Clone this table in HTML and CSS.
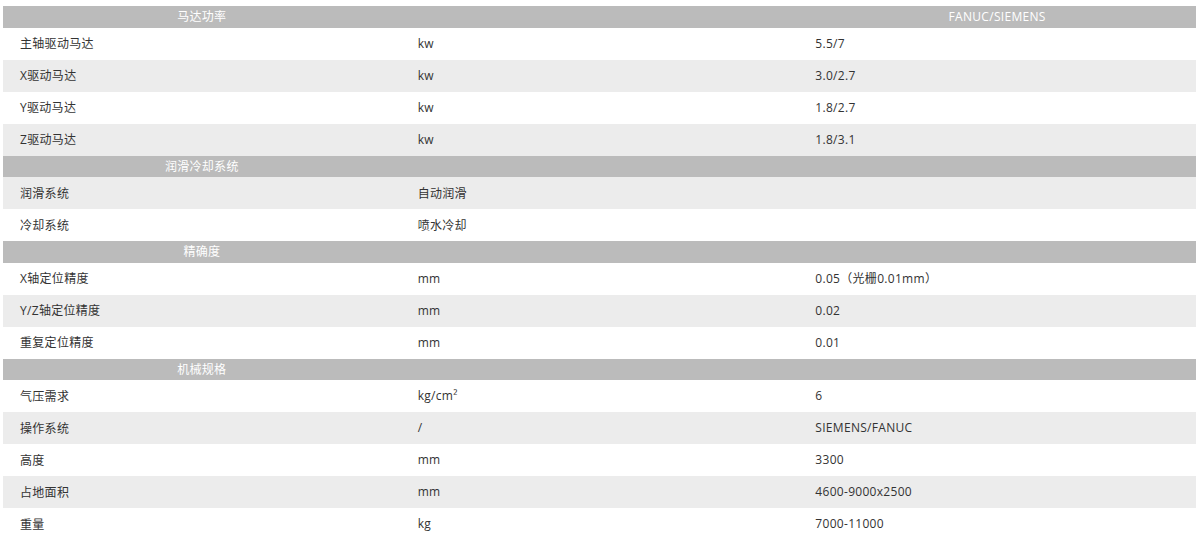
FILE: index.html
```html
<!DOCTYPE html>
<html lang="zh-CN">
<head>
<meta charset="utf-8">
<title>参数</title>
<link rel="stylesheet" href="styles.css">
</head>
<body>
<div class="spec">
  <div class="row head"><div class="cell">马达功率</div><div class="cell"></div><div class="cell">FANUC/SIEMENS</div></div>
  <div class="row"><div class="cell">主轴驱动马达</div><div class="cell">kw</div><div class="cell">5.5/7</div></div>
  <div class="row alt"><div class="cell">X驱动马达</div><div class="cell">kw</div><div class="cell">3.0/2.7</div></div>
  <div class="row"><div class="cell">Y驱动马达</div><div class="cell">kw</div><div class="cell">1.8/2.7</div></div>
  <div class="row alt"><div class="cell">Z驱动马达</div><div class="cell">kw</div><div class="cell">1.8/3.1</div></div>

  <div class="row head"><div class="cell">润滑冷却系统</div><div class="cell"></div><div class="cell"></div></div>
  <div class="row alt"><div class="cell">润滑系统</div><div class="cell">自动润滑</div><div class="cell"></div></div>
  <div class="row"><div class="cell">冷却系统</div><div class="cell">喷水冷却</div><div class="cell"></div></div>

  <div class="row head"><div class="cell">精确度</div><div class="cell"></div><div class="cell"></div></div>
  <div class="row"><div class="cell">X轴定位精度</div><div class="cell">mm</div><div class="cell">0.05（光栅0.01mm）</div></div>
  <div class="row alt"><div class="cell">Y/Z轴定位精度</div><div class="cell">mm</div><div class="cell">0.02</div></div>
  <div class="row"><div class="cell">重复定位精度</div><div class="cell">mm</div><div class="cell">0.01</div></div>

  <div class="row head"><div class="cell">机械规格</div><div class="cell"></div><div class="cell"></div></div>
  <div class="row"><div class="cell">气压需求</div><div class="cell">kg/cm²</div><div class="cell">6</div></div>
  <div class="row alt"><div class="cell">操作系统</div><div class="cell">/</div><div class="cell">SIEMENS/FANUC</div></div>
  <div class="row"><div class="cell">高度</div><div class="cell">mm</div><div class="cell">3300</div></div>
  <div class="row alt"><div class="cell">占地面积</div><div class="cell">mm</div><div class="cell">4600-9000x2500</div></div>
  <div class="row"><div class="cell">重量</div><div class="cell">kg</div><div class="cell">7000-11000</div></div>
</div>
</body>
</html>
```
FILE: styles.css
```css
html, body {
  margin: 0;
  background: #ffffff;
}
body {
  padding: 6px 4px 0 3px;
  font-family: "Open Sans", "Noto Sans CJK SC", sans-serif;
  font-size: 12px;
  letter-spacing: 0.3px;
  color: #333333;
}
.spec {
  display: flex;
  flex-direction: column;
}
.row {
  display: grid;
  grid-template-columns: 1fr 1fr 1fr;
  height: 32px;
  align-items: center;
  background: #ffffff;
}
.row.alt {
  background: #ececec;
}
.row .cell {
  padding-left: 17px;
  padding-bottom: 1px;
  white-space: nowrap;
}
.row.head {
  height: 21.5px;
  background: #bbbbbb;
  color: #ffffff;
}
.row.head .cell {
  padding-left: 0;
  text-align: center;
}
```
